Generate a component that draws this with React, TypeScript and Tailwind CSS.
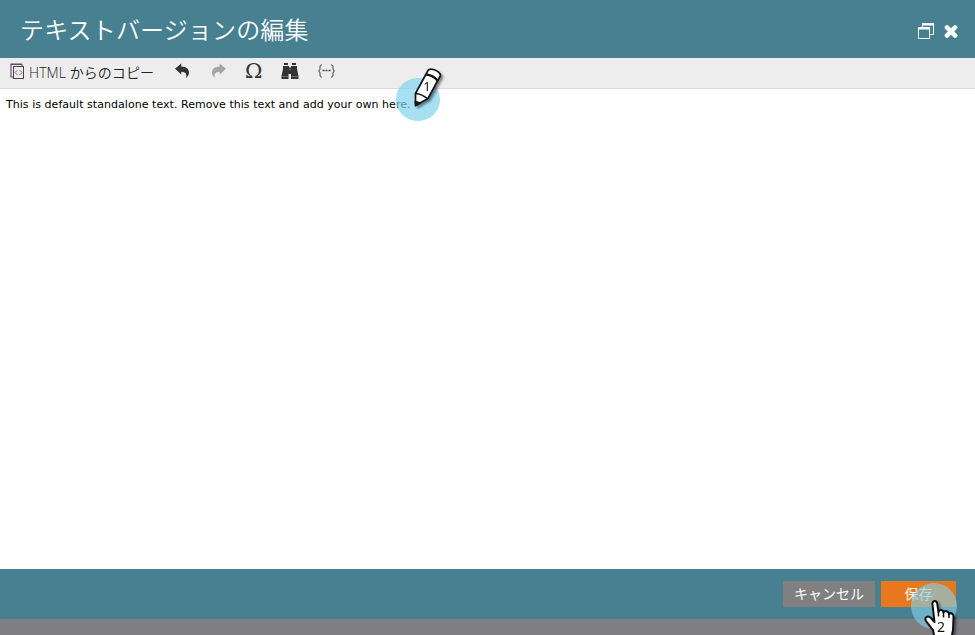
import React from "react";
import { FaTimes } from "react-icons/fa";

function CopyIcon() {
  return (
    <svg width="15" height="17" viewBox="0 0 15 17" fill="none">
      <path d="M1 14V1.500h11" stroke="#7d4a86" strokeWidth="1.200" />
      <path d="M.5 1h11.500v2M.5 14h2.500" stroke="#554a58" />
      <rect x="3.500" y="3.500" width="10" height="12" stroke="#4a4347" />
      <path d="M7.500 7 5 9.500 7.500 12M9.500 7 12 9.500 9.500 12" stroke="#777" />
    </svg>
  );
}

function ArrowIcon() {
  return (
    <svg width="15" height="16" viewBox="0 0 15 16" fill="currentColor" className="block">
      <path d="M0 5.700 6.300.5v3.100C11.500 3.700 14 6.300 14 9.500c0 2.600-1.400 4.300-3.200 5.600 1-2.300 1.300-6-4.500-6.300v2.700Z" />
    </svg>
  );
}

function BinocularsIcon() {
  return (
    <svg width="18" height="17" viewBox="0 0 18 17" fill="#333">
      <path d="M3 0h4v2H3zM11 0h4v2h-4zM2 3h6v1.500h2V3h6v3l1.500 7v3H10v-5H7.500v5H.5v-3L2 6z" />
      <path d="M1 13.500h6.500M10.500 13.500H17M8 6.500h2" stroke="#888" strokeWidth=".7" />
    </svg>
  );
}

function PencilMarker() {
  return (
    <div className="absolute left-[396px] top-[62px] h-[60px] w-[52px]">
      <div className="absolute left-0 top-[16px] h-[43px] w-[44px] rounded-full bg-[#82d2ee]/70" />
      <svg className="absolute left-0 top-0 drop-shadow-[2px_2px_1px_rgba(0,0,0,0.45)]" width="52" height="60" viewBox="0 0 52 60">
        <path d="M19.500 43.500 19.500 31.500 32 8.500C34 5 44 9 44.500 13.500L32 36.500Z" fill="#fff" stroke="#151515" strokeWidth="1.700" strokeLinejoin="round" />
        <path d="M30 12.500Q37 13 42 19" fill="none" stroke="#151515" strokeWidth="2.400" />
        <path d="M19.500 31.500Q26 32 32 37" fill="none" stroke="#151515" strokeWidth="1.700" />
        <path d="M19 39 19.500 44 25 41Z" fill="#151515" stroke="#151515" />
        <text x="31" y="28.500" textAnchor="middle" fontSize="13" fontFamily="Noto Sans, sans-serif" fill="#111">1</text>
      </svg>
    </div>
  );
}

function HandMarker() {
  return (
    <div className="absolute left-[905px] top-[575px] h-[60px] w-[70px] overflow-hidden">
      <div className="absolute left-[6px] top-[8px] h-[46px] w-[46px] rounded-full bg-[#82cbe5]/65" />
      <svg className="absolute left-0 top-0 drop-shadow-[2px_2px_1px_rgba(0,0,0,0.4)]" width="70" height="60" viewBox="0 0 70 60">
        <path d="M30 65 28 55 21 46C19 42 23 40 26 43L29.500 47 27.500 29.500C27 25 31.500 25 32.200 28.500L33.500 37C34.500 34 38 34.500 38.500 37.500 40 35 43.500 36 44 39 46 37 48.500 39 48.500 42L48 55 46 65Z" fill="#fff" stroke="#111" strokeWidth="2" strokeLinejoin="round" />
        <path d="M33.500 36.500v5M38.500 37.500v5M44 39v4" stroke="#111" strokeWidth="1.500" />
        <text x="36" y="57" textAnchor="middle" fontSize="14" fontFamily="Noto Sans, sans-serif" fill="#111">2</text>
      </svg>
    </div>
  );
}

export default function App() {
  return (
    <div className="relative flex h-[635px] w-[975px] flex-col overflow-hidden bg-white">
      <header className="flex h-[58px] shrink-0 items-center justify-between bg-[#468091] pl-[20px] pr-[16px] text-white">
        <h1 className="pb-px font-['Noto_Sans_CJK_JP',sans-serif] text-[24px] font-[350] leading-[34px] tracking-[0.15px]">テキストバージョンの編集</h1>
        <div className="flex items-center gap-[8px] pt-[4px]">
          <svg width="17" height="16" viewBox="0 0 17 16" fill="none" stroke="#fff">
            <path d="M4.500 4V.5h11v11H12M.5 4.500h11v11H.5z" />
            <path d="M4 1.500h12M0 5.500h12" strokeWidth="2" />
          </svg>
          <FaTimes size={17} className="w-[16px]" strokeWidth={40} stroke="white" />
        </div>
      </header>

      <div className="flex h-[31px] shrink-0 items-center border-b border-[#d9d9d9] bg-[#ededed] text-[#333]">
        <button className="flex w-[155px] shrink-0 items-center gap-[4px] pl-[10px]">
          <span className="pb-[3px]"><CopyIcon /></span>
          <span className="whitespace-pre font-['Open_Sans','Noto_Sans_CJK_JP',sans-serif] text-[14px] font-[350] leading-[20px] tracking-[0.07px] text-[#222]">HTML からのコピー</span>
        </button>
        <div className="ml-[20px] flex items-center pb-[4px]">
          <button className="w-[36px]"><ArrowIcon /></button>
          <button className="w-[34px] text-[#a5a5a5]"><span className="block w-[15px] -scale-x-100"><ArrowIcon /></span></button>
          <button className="w-[36px] text-left font-['DejaVu_Serif',serif] text-[21px] leading-[22px]">Ω</button>
          <button className="w-[36px]"><BinocularsIcon /></button>
          <button className="pl-px text-[#444]">
            <svg width="17" height="14" viewBox="0 0 17 14" fill="none" stroke="currentColor">
              <path d="M4 1H3Q2 1 2 3v2q0 1.500-1.500 2Q2 7.500 2 9v2q0 2 1 2h1M13 1h1q1 0 1 2v2q0 1.500 1.500 2Q15 7.500 15 9v2q0 2-1 2h-1" />
              <path d="M4.500 6.500h2m1 0h2m1 0h2" strokeWidth="1.500" />
            </svg>
          </button>
        </div>
      </div>

      <main className="flex-1 bg-white px-[6px] pt-[8px] font-['DejaVu_Sans',sans-serif] text-[11px] leading-[16px] text-black">
        <span className="whitespace-nowrap tracking-[0.04px]">This is default standalone text. Remove this text and add your own here.</span>
      </main>

      <footer className="flex h-[50px] shrink-0 items-center justify-end gap-[6px] bg-[#468091] pr-[19px] font-['Noto_Sans_CJK_JP',sans-serif] text-[14px] font-normal leading-[20px] text-white">
        <button className="h-[26px] w-[92px] bg-[#808080] pb-[2px]">キャンセル</button>
        <button className="h-[26px] w-[75px] bg-[#e8781b] pb-[2px]">保存</button>
      </footer>
      <div className="h-[16px] shrink-0 bg-[#7f7e80]" />

      <PencilMarker />
      <HandMarker />
    </div>
  );
}
